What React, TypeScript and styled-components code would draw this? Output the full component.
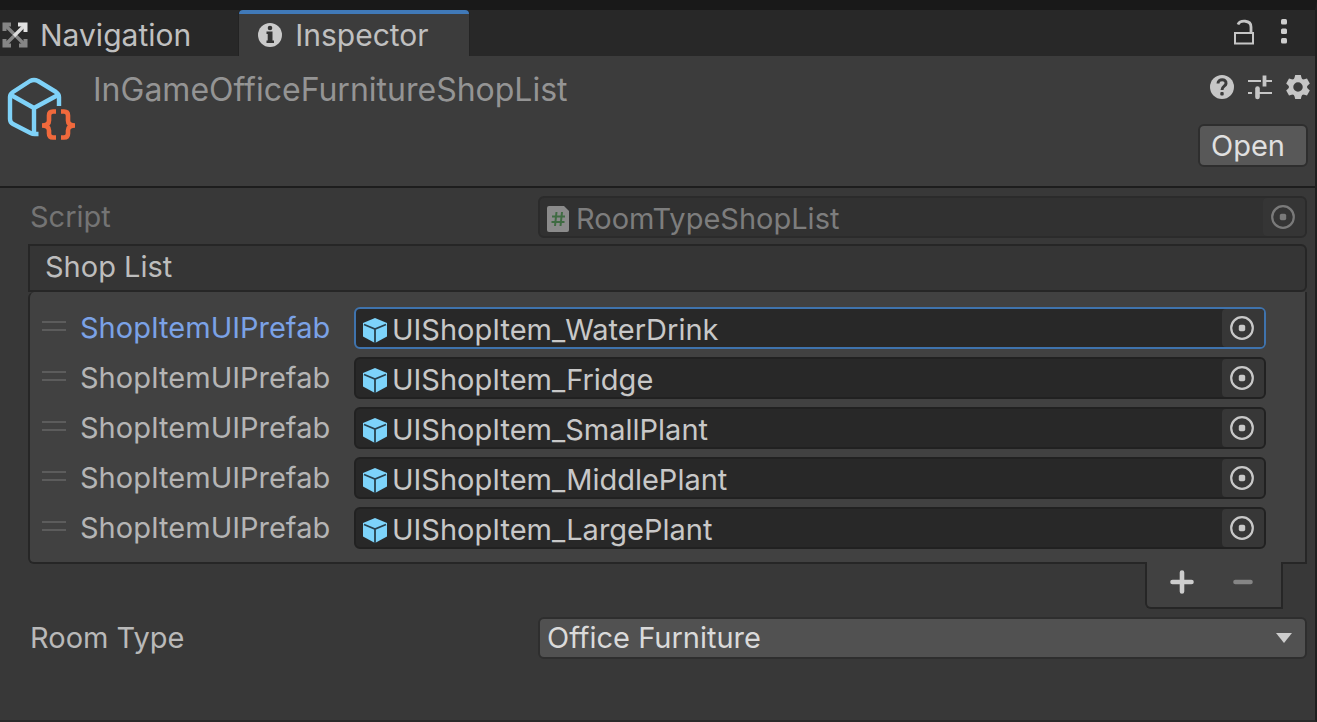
import React, { useState } from "react";
import styled, { createGlobalStyle, css } from "styled-components";

const GlobalStyle = createGlobalStyle`
  *, *::before, *::after { box-sizing: border-box; }
  body {
    margin: 0;
    background: #383838;
    color: #bdbdbd;
    font-family: Inter, "Liberation Sans", sans-serif;
    font-size: 29px;
    line-height: 36px;
  }
  button, input, select { font: inherit; color: inherit; }
  svg { display: block; flex: none; }
`;

const Panel = styled.main`
  display: flex;
  flex-direction: column;
  min-height: 100vh;
  border-top: 10px solid #191919;
  border-right: 2px solid #1f1f1f;
  border-bottom: 2px solid #2a2a2a;
`;

const TabBar = styled.div`
  display: flex;
  justify-content: space-between;
  height: 46px;
  background: #282828;
`;

const Tabs = styled.div`
  display: flex;
`;

const Tab = styled.button<{ $active?: boolean }>`
  display: flex;
  align-items: center;
  gap: 12px;
  padding: 0 40px 0 18px;
  border: 0;
  border-top: 4px solid transparent;
  border-radius: 4px 4px 0 0;
  background: none;
  color: #c0c0c0;
  font-size: 30px;
  ${(p) =>
    p.$active
      ? css`
          border-top-color: #4079b8;
          background: #3c3c3c;
          box-shadow: 0 0 0 1px #222;
          clip-path: inset(0 -1px 0 -1px);
        `
      : css`
          padding: 0 48px 0 2px;
        `}
`;

const IconBar = styled.div<{ $gap: number }>`
  display: flex;
  align-items: center;
  gap: ${(p) => p.$gap}px;
`;

const TabTools = styled(IconBar)`
  padding: 0 28px 2px 0;
`;

const IconButton = styled.button`
  display: flex;
  padding: 0;
  border: 0;
  background: none;
`;

const Header = styled.header`
  display: flex;
  align-items: flex-start;
  height: 132px;
  padding: 16px 4px 0 4px;
  border-bottom: 2px solid #1d1d1d;
  background: #3c3c3c;
`;

const Title = styled.h1`
  flex: 1;
  min-width: 0;
  margin: 0 0 0 17px;
  font-size: 32px;
  font-weight: 400;
  color: #949494;
`;

const HeaderTools = styled.div`
  display: flex;
  flex-direction: column;
  align-items: flex-end;
  gap: 24px;
  padding-top: 2px;
`;

const OpenButton = styled.button`
  width: 110px;
  height: 43px;
  margin-right: 3px;
  padding: 0 10px 0 0;
  border: 2px solid #2e2e2e;
  border-radius: 6px;
  background: #585858;
  color: #e0e0e0;
`;

const Body = styled.div`
  padding: 8px 8px 24px 28px;
`;

const PropertyRow = styled.div`
  display: grid;
  grid-template-columns: 508px minmax(0, 1fr);
  align-items: center;
  padding-left: 2px;
`;

const PropertyLabel = styled.label<{ $dim?: boolean }>`
  color: ${(p) => (p.$dim ? "#747474" : "#b9b9b9")};
`;

const Field = styled.div<{ $tone?: "selected" | "disabled" }>`
  display: flex;
  align-items: stretch;
  min-width: 0;
  height: 42px;
  padding-left: 6px;
  border: 2px solid #212121;
  border-radius: 6px;
  background: #282828;
  color: #c8c8c8;
  ${(p) =>
    p.$tone === "selected" &&
    css`
      border-color: #3f73ad;
    `}
  ${(p) =>
    p.$tone === "disabled" &&
    css`
      border-color: #2b2b2b;
      background: #313131;
      color: #7d7d7d;
    `}
`;

const FieldIcon = styled.span`
  display: flex;
  align-items: center;
  width: 30px;
  padding-top: 4px;
`;

const FieldInput = styled.input`
  flex: 1;
  min-width: 0;
  padding: 3px 0 0;
  border: 0;
  outline: 0;
  background: none;
`;

const Picker = styled.button<{ $dim?: boolean }>`
  display: flex;
  align-items: center;
  justify-content: center;
  width: 42px;
  padding: 0 2px 0 0;
  border: 0;
  border-radius: 4px;
  background: ${(p) => (p.$dim ? "#353535" : "#373737")};
  color: ${(p) => (p.$dim ? "#7a7a7a" : "#c8c8c8")};
`;

const ListHeader = styled.h2`
  height: 48px;
  margin: 6px 0 0;
  padding: 3px 15px;
  border: 2px solid #262626;
  border-radius: 0 6px 6px 0;
  background: #353535;
  font-size: 29px;
  font-weight: 400;
`;

const List = styled.ul`
  display: flex;
  flex-direction: column;
  gap: 8px;
  margin: 0;
  padding: 15px 39px 13px 12px;
  border: 2px solid #262626;
  border-top: 0;
  border-radius: 6px 0 0 6px;
  background: #414141;
  list-style: none;
`;

const ListItem = styled.li`
  display: grid;
  grid-template-columns: 38px 274px minmax(0, 1fr);
  align-items: center;
`;

const DragHandle = styled.span`
  width: 24px;
  height: 10px;
  margin-bottom: 4px;
  border: solid #5c5c5c;
  border-width: 2px 0;
`;

const ItemLabel = styled.label<{ $selected?: boolean }>`
  color: ${(p) => (p.$selected ? "#7ba2e6" : "#b5b5b5")};
`;

const ListFooter = styled.div`
  display: flex;
  justify-content: space-around;
  width: 138px;
  height: 47px;
  margin: -2px 24px 8px auto;
  padding: 0 8px 0 4px;
  border: 2px solid #262626;
  border-top: 0;
  border-radius: 0 0 0 6px;
  background: #414141;
`;

const FooterButton = styled(IconButton)`
  align-items: center;
  padding: 0 12px 6px;
`;

const SelectBox = styled.div`
  display: grid;
  align-items: center;
  & > * {
    grid-area: 1 / 1;
  }
  & > svg {
    justify-self: end;
    margin-right: 14px;
    pointer-events: none;
  }
`;

const Select = styled.select`
  width: 100%;
  height: 42px;
  padding: 0 40px 0 7px;
  border: 2px solid #2e2e2e;
  border-radius: 6px;
  background: #515151;
  color: #dadada;
  appearance: none;
`;

const NavigationIcon = () => (
  <svg width="26" height="26" viewBox="0 0 26 26" fill="none" strokeWidth="4" aria-hidden="true">
    <g stroke="#858585">
      <path d="M4 4 22 22M4 22l9-9" strokeWidth="3.400" />
      <path d="M2.500 9V2.500H9M2.500 17v6.500H9M23.500 17v6.500H17" />
    </g>
    <path d="M12 14 22 4" stroke="#dcdcdc" strokeWidth="3.400" />
    <path d="M16 2.500h7.500V10" stroke="#e2e2e2" />
  </svg>
);

const InfoIcon = () => (
  <svg width="26" height="26" viewBox="0 0 26 26" aria-hidden="true">
    <circle cx="13" cy="13" r="12" fill="#cacaca" />
    <circle cx="13" cy="6" r="2.300" fill="#333" />
    <path d="M9.500 9.500h6v9h1.500v2.500h-7.500v-2.500h1.200v-6.500h-1.200z" fill="#333" />
  </svg>
);

const LockIcon = () => (
  <svg width="22" height="28" viewBox="0 0 22 28" fill="none" stroke="#c6c6c6" strokeWidth="2" aria-hidden="true">
    <path d="M2 15h18v10.500H2z" />
    <path d="M5 6.500C7 2 18 1.500 18 9v6" strokeWidth="2.800" />
  </svg>
);

const MenuIcon = () => (
  <svg width="6" height="26" viewBox="0 0 6 26" fill="#cdcdcd" aria-hidden="true">
    <rect width="6" height="5.500" rx="1.500" />
    <rect y="9.500" width="6" height="5.500" rx="1.500" />
    <rect y="19" width="6" height="5.500" rx="1.500" />
  </svg>
);

const HelpIcon = () => (
  <svg width="26" height="26" viewBox="0 0 26 26" fill="none" aria-hidden="true">
    <circle cx="13" cy="13" r="12" fill="#c6c6c6" />
    <path d="M9 9.500C9 4.500 17.500 4.500 17 9.500c-.3 3-4 2.500-4 6.500" stroke="#3c3c3c" strokeWidth="3" />
    <rect x="11.300" y="18" width="3.400" height="3.400" rx="1" fill="#3c3c3c" />
  </svg>
);

const PresetIcon = () => (
  <svg width="24" height="26" viewBox="0 0 24 26" fill="none" stroke="#c6c6c6" strokeWidth="2" aria-hidden="true">
    <path d="M0 7h13M17 7h7M0 19h4M11 19h13" />
    <path d="M16.500 1.500v11" strokeWidth="3.800" />
    <path d="M9.500 14.500v8.500" strokeWidth="4.600" strokeLinecap="round" />
  </svg>
);

const GearIcon = () => (
  <svg width="26" height="26" viewBox="-13 -13 26 26" aria-hidden="true">
    <circle r="7" fill="none" stroke="#c6c6c6" strokeWidth="4.500" />
    {[0, 60, 120, 180, 240, 300].map((angle) => (
      <path key={angle} d="M-4-7.500-2.800-12h5.600L4-7.500z" fill="#c6c6c6" transform={`rotate(${angle})`} />
    ))}
  </svg>
);

const AssetIcon = () => (
  <svg width="72" height="72" viewBox="0 0 72 72" fill="none" aria-hidden="true">
    <g stroke="#7fd2f8" strokeWidth="4.400" strokeLinejoin="round">
      <path d="M34.500 62h-4q-2 0-4-1L9 52q-3-1.500-3-5V25q0-3 3-5L26 9q4-2 8 0l18 11q3 2 3 5v9" />
      <path d="M7 23l23 13 24-13M30 36v26" />
    </g>
    <g stroke="#f0693c" strokeWidth="4.600">
      <path d="M52 39.500h-3q-4 0-4 4v5q0 5-7 5 7 0 7 5v3q0 4 4 4h3" />
      <path d="M57 39.500h3q4 0 4 4v5q0 5 7 5-7 0-7 5v3q0 4-4 4h-3" />
    </g>
  </svg>
);

const ScriptIcon = () => (
  <svg width="24" height="26" viewBox="0 0 24 26" fill="none" aria-hidden="true">
    <path d="M3 0h15l5 5v19q0 2-2 2H3q-2 0-2-2V2q0-2 2-2z" fill="#8b8b8b" />
    <path d="M10.500 6 9 20M16 6l-1.500 14M6 10.500h13M5.500 16h13" stroke="#3f6b42" strokeWidth="2" />
  </svg>
);

const PrefabIcon = () => (
  <svg width="26" height="28" viewBox="0 0 26 28" fill="none" aria-hidden="true">
    <path d="M13 2 25 7v13.500L13 27 1 20.500V7z" fill="#7dd3fa" />
    <path d="M2 8.500 13 13l11-4.500M13 13v14" stroke="#28404c" strokeWidth="1.800" />
  </svg>
);

const PickerIcon = () => (
  <svg width="26" height="26" viewBox="0 0 26 26" aria-hidden="true">
    <circle cx="13" cy="13" r="10.800" fill="none" stroke="currentColor" strokeWidth="2.200" />
    <rect x="9.800" y="9.800" width="6.400" height="6.400" rx="1.800" fill="currentColor" />
  </svg>
);

const PlusIcon = () => (
  <svg width="24" height="24" viewBox="0 0 24 24" stroke="#cdcdcd" strokeWidth="4.600" strokeLinecap="round" aria-hidden="true">
    <path d="M2.500 12h19M12 2.500v19" />
  </svg>
);

const MinusIcon = () => (
  <svg width="24" height="24" viewBox="0 0 24 24" stroke="#858585" strokeWidth="4.600" strokeLinecap="round" aria-hidden="true">
    <path d="M4.500 12h15" />
  </svg>
);

const ArrowIcon = () => (
  <svg width="18" height="12" viewBox="0 0 18 12" fill="#cdcdcd" aria-hidden="true">
    <path d="M1 1h16L9 11z" />
  </svg>
);

const prefabs = [
  "UIShopItem_WaterDrink",
  "UIShopItem_Fridge",
  "UIShopItem_SmallPlant",
  "UIShopItem_MiddlePlant",
  "UIShopItem_LargePlant",
];

export default function App() {
  const [selected, setSelected] = useState(0);

  return (
    <>
      <GlobalStyle />
      <Panel>
        <TabBar>
          <Tabs role="tablist">
            <Tab role="tab" aria-selected="false">
              <NavigationIcon />
              Navigation
            </Tab>
            <Tab role="tab" aria-selected="true" $active>
              <InfoIcon />
              Inspector
            </Tab>
          </Tabs>
          <TabTools $gap={26}>
            <IconButton aria-label="Lock">
              <LockIcon />
            </IconButton>
            <IconButton aria-label="Menu">
              <MenuIcon />
            </IconButton>
          </TabTools>
        </TabBar>

        <Header>
          <AssetIcon />
          <Title>InGameOfficeFurnitureShopList</Title>
          <HeaderTools>
            <IconBar $gap={13}>
              <IconButton aria-label="Help">
                <HelpIcon />
              </IconButton>
              <IconButton aria-label="Presets">
                <PresetIcon />
              </IconButton>
              <IconButton aria-label="Settings">
                <GearIcon />
              </IconButton>
            </IconBar>
            <OpenButton>Open</OpenButton>
          </HeaderTools>
        </Header>

        <Body>
          <PropertyRow>
            <PropertyLabel htmlFor="script" $dim>
              Script
            </PropertyLabel>
            <Field $tone="disabled">
              <FieldIcon>
                <ScriptIcon />
              </FieldIcon>
              <FieldInput id="script" value="RoomTypeShopList" readOnly />
              <Picker aria-label="Pick script" $dim>
                <PickerIcon />
              </Picker>
            </Field>
          </PropertyRow>

          <ListHeader>Shop List</ListHeader>
          <List>
            {prefabs.map((name, index) => (
              <ListItem key={name}>
                <DragHandle />
                <ItemLabel htmlFor={name} $selected={index === selected}>
                  ShopItemUIPrefab
                </ItemLabel>
                <Field $tone={index === selected ? "selected" : undefined}>
                  <FieldIcon>
                    <PrefabIcon />
                  </FieldIcon>
                  <FieldInput id={name} value={name} readOnly onFocus={() => setSelected(index)} />
                  <Picker aria-label={`Pick ${name}`}>
                    <PickerIcon />
                  </Picker>
                </Field>
              </ListItem>
            ))}
          </List>
          <ListFooter>
            <FooterButton aria-label="Add">
              <PlusIcon />
            </FooterButton>
            <FooterButton aria-label="Remove">
              <MinusIcon />
            </FooterButton>
          </ListFooter>

          <PropertyRow>
            <PropertyLabel htmlFor="room-type">Room Type</PropertyLabel>
            <SelectBox>
              <Select id="room-type" defaultValue="office">
                <option value="office">Office Furniture</option>
              </Select>
              <ArrowIcon />
            </SelectBox>
          </PropertyRow>
        </Body>
      </Panel>
    </>
  );
}
